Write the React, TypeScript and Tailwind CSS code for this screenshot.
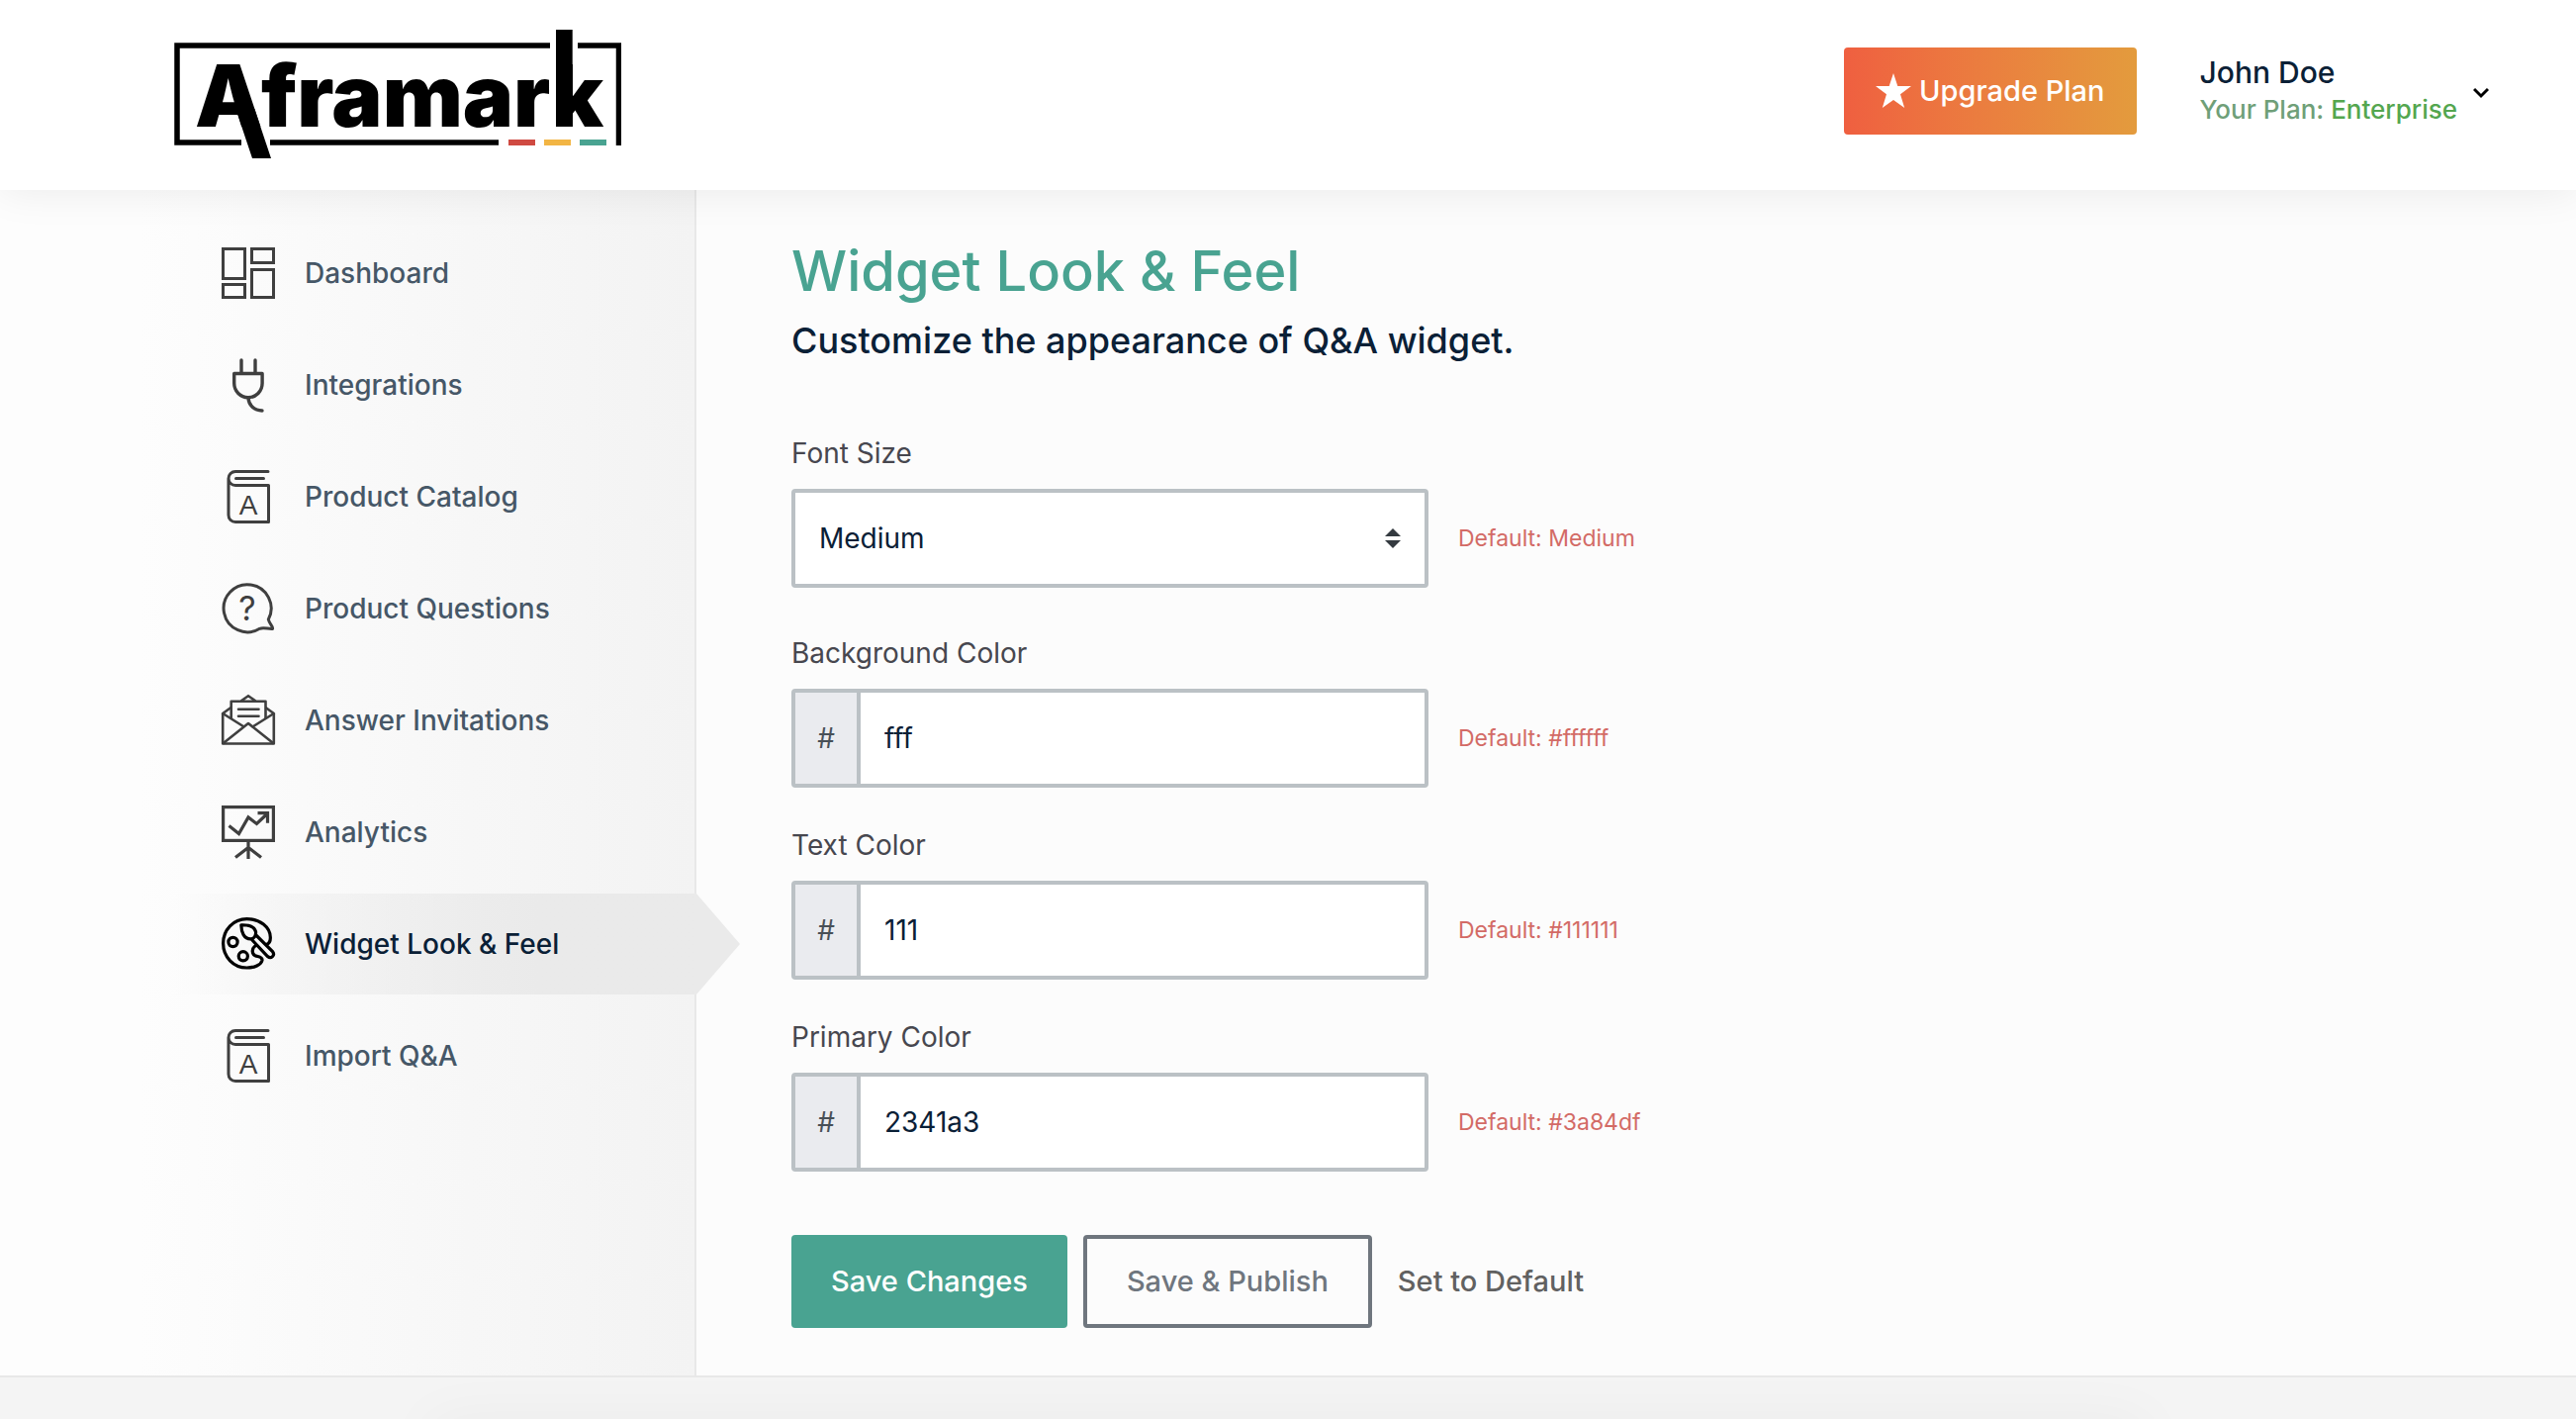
import React, { useState } from 'react'

type IconProps = { children: React.ReactNode; width?: number }

const NavIcon = ({ children, width = 3 }: IconProps) => (
  <svg
    className='h-[54px] w-[54px] shrink-0 overflow-visible'
    viewBox='0 0 54 54'
    fill='none'
    stroke='currentColor'
    strokeWidth={width}
    aria-hidden='true'
  >
    {children}
  </svg>
)

const DashboardIcon = () => (
  <NavIcon>
    <rect x='1.5' y='2.5' width='22' height='30' />
    <rect x='30.5' y='2.5' width='22' height='14' />
    <rect x='1.5' y='38.5' width='22' height='13' />
    <rect x='30.5' y='23.5' width='22' height='28' />
  </NavIcon>
)

const PlugIcon = () => (
  <NavIcon width={3.4}>
    <path d='M20 2v13M34 2v13' strokeLinecap='round' />
    <path d='M12.7 15.5h28.4v9.8c0 8-6.2 14.4-14.2 14.4s-14.2-6.4-14.2-14.4z' strokeLinejoin='round' />
    <path d='M27 40c.3 7.5 6 13 14 13' strokeLinecap='round' />
  </NavIcon>
)

const BookIcon = () => (
  <NavIcon>
    <path
      d='M47 1.5H14a7 7 0 0 0 0 14h33.500v37H14c-4 0-7-3-7-7v-37'
      strokeLinecap='round'
      strokeLinejoin='round'
    />
    <path d='M14.5 8.5H42.5' strokeLinecap='round' />
    <text
      x='27'
      y='45'
      textAnchor='middle'
      fill='currentColor'
      stroke='none'
      className='font-["Liberation_Sans",sans-serif] text-[28px]'
    >
      A
    </text>
  </NavIcon>
)

const QuestionIcon = () => (
  <NavIcon>
    <path
      d='M47.3 38A24 24 0 1 0 38.5 47.3C43 45.5 47 48 51.5 47.5C52.5 45 48.5 43 47.3 38z'
      strokeLinejoin='round'
    />
    <text
      x='26'
      y='39'
      textAnchor='middle'
      fill='currentColor'
      stroke='none'
      className='font-["Inter",sans-serif] text-[34px]'
    >
      ?
    </text>
  </NavIcon>
)

const EnvelopeIcon = () => (
  <NavIcon width={2.6}>
    <path d='M1.2 20v30.5h51.6V20' strokeLinejoin='round' />
    <path d='M9.5 14L1.2 20l21.5 13.5M44.5 14l8.3 6-21.5 13.5M1.2 50.5L27 30l25.8 20.5' strokeLinejoin='round' />
    <path d='M9.7 25V7.7h34.8V25M19.5 7.5L27 2.2l7.5 5.3' strokeLinejoin='round' />
    <path d='M17 15.7h20.5M17 22.8h20.5' strokeLinecap='round' />
  </NavIcon>
)

const AnalyticsIcon = () => (
  <NavIcon width={3.2}>
    <rect x='1.6' y='1.6' width='50.8' height='33.8' />
    <path d='M7.5 20.5l10 8L27 12l8.5 6.5L46 8.5M36.5 7.7h10v10' />
    <path d='M27 36v18M14 52.5l13-10 13 10' />
  </NavIcon>
)

const PaletteIcon = () => (
  <NavIcon width={3.2}>
    <path
      d='M34.5 28.5C30.5 31 30 37 34 38.8C37 40 41.5 39.5 41 43.5C40 48 33 51 25.5 51C12 51 1.6 40 1.6 26.3S12 1.6 25.5 1.6C39 1.6 49 10 49.3 20C49.5 23.5 48 26.5 45.5 27.5'
      strokeLinecap='round'
    />
    <circle cx='11.5' cy='25' r='4.6' />
    <circle cx='21.8' cy='39.3' r='4.6' />
    <path d='M19.8 7.8C27 7.5 33 9 34.5 14.5C35 18.5 33 21.5 29.5 21.8C22.5 22 20 15 19.8 7.8z' strokeLinejoin='round' />
    <path d='M30.5 22.5L46.5 39.5C50 42.5 54.5 38.5 51.5 34.5L34.8 18' />
  </NavIcon>
)

const navItems = [
  { label: 'Dashboard', icon: <DashboardIcon /> },
  { label: 'Integrations', icon: <PlugIcon /> },
  { label: 'Product Catalog', icon: <BookIcon /> },
  { label: 'Product Questions', icon: <QuestionIcon /> },
  { label: 'Answer Invitations', icon: <EnvelopeIcon /> },
  { label: 'Analytics', icon: <AnalyticsIcon /> },
  { label: 'Widget Look & Feel', icon: <PaletteIcon />, active: true },
  { label: 'Import Q&A', icon: <BookIcon /> },
]

const Logo = () => (
  <svg className='h-[130px] w-[452px]' viewBox='0 0 452 130' role='img' aria-label='Aframark'>
    <path d='M380 16H3v98h65M97 114h231M408 16h41.5v101' fill='none' stroke='#000' strokeWidth='5.5' />
    <text x='21' y='98' className='font-["Inter",sans-serif] text-[86px] font-black'>
      Aframark
    </text>
    {/* long leg of the A and raised stem of the k */}
    <path d='M62.3 80h19L98 130H79z' />
    <path d='M386 0h16.7v98H386z' />
    <path d='M338 111h27v6h-27z' fill='#cf4a41' />
    <path d='M374 111h27v6h-27z' fill='#f2b544' />
    <path d='M410 111h27v6h-27z' fill='#49a391' />
  </svg>
)

const Header = () => (
  <header className='relative z-10 flex h-48 items-start justify-between bg-white pt-[30px] pr-22 pl-44 shadow-[0_0_40px_rgba(0,0,0,0.08)]'>
    <a href='#'>
      <Logo />
    </a>
    <div className='mt-[18px] flex items-center gap-16'>
      <button className='flex h-22 items-center gap-2 rounded bg-linear-to-r from-[#ef5f40] to-[#e39b3d] px-8 text-[29px] font-medium text-white'>
        <svg className='h-9 w-9' viewBox='0 0 36 36' fill='currentColor' aria-hidden='true'>
          <path d='M18 0l4.3 13H36L25 21.3 29.2 35 18 27 6.8 35 11 21.3 0 13h13.7z' />
        </svg>
        Upgrade Plan
      </button>
      <button className='flex items-center gap-4 text-left font-medium'>
        <span className='flex flex-col leading-[38px]'>
          <span className='text-[30px] text-[#0a2036]'>John Doe</span>
          <span className='text-[26px] text-[#6f9f78]'>
            Your Plan: <span className='text-[#54a64f]'>Enterprise</span>
          </span>
        </span>
        <svg className='h-4 w-4' viewBox='0 0 16 16' fill='none' stroke='#000' strokeWidth='3' aria-hidden='true'>
          <path d='M1 6l7 7 7-7' />
        </svg>
      </button>
    </div>
  </header>
)

const Sidebar = () => (
  <aside className='w-[704px] shrink-0 border-r-2 border-[#e8e8e8] bg-linear-to-r from-[#fdfdfd] from-20% to-[#f3f3f3] pt-[33px] pl-44'>
    <nav className='-mr-0.5'>
      <ul className='flex flex-col gap-[11px]'>
        {navItems.map((item) => (
          <li key={item.label} className='relative'>
            <a
              href='#'
              className={
                item.active
                  ? 'flex items-center gap-[30px] bg-linear-to-r from-transparent to-[#eaeaea] to-70% py-6 pl-12 text-black'
                  : 'flex items-center gap-[30px] py-6 pl-12 text-[#3f3f3f]'
              }
            >
              {item.icon}
              <span className={item.active ? 'text-[28px] font-medium text-[#0a2036]' : 'text-[28px] font-medium text-[#465767]'}>
                {item.label}
              </span>
            </a>
            {item.active && (
              <svg className='absolute top-0 left-full h-[102px] w-11' viewBox='0 0 44 102' fill='#eaeaea' aria-hidden='true'>
                <path d='M0 0l44 51L0 102z' />
              </svg>
            )}
          </li>
        ))}
      </ul>
    </nav>
  </aside>
)

type ColorFieldProps = { id: string; label: string; value: string; hint: string; onChange: (v: string) => void }

const ColorField = ({ id, label, value, hint, onChange }: ColorFieldProps) => (
  <div>
    <label htmlFor={id} className='mb-4 block text-[28px] leading-10 text-[#47474f]'>
      {label}
    </label>
    <div className='flex items-center gap-[30px]'>
      <div className='flex h-[100px] w-[644px] overflow-hidden rounded border-4 border-[#bbc1c5] bg-white'>
        <span className='flex w-[66px] shrink-0 items-center justify-center border-r-4 border-[#bbc1c5] bg-[#eaebef] text-[28px] text-[#495057]'>
          #
        </span>
        <input
          id={id}
          type='text'
          value={value}
          onChange={(e) => onChange(e.target.value)}
          className='min-w-0 flex-1 pl-6 text-[28px] text-[#0a2036] outline-none'
        />
      </div>
      <span className='text-[23px] text-[#d36b66]'>{hint}</span>
    </div>
  </div>
)

const WidgetForm = () => {
  const [fontSize, setFontSize] = useState('Medium')
  const [background, setBackground] = useState('fff')
  const [text, setText] = useState('111')
  const [primary, setPrimary] = useState('2341a3')

  return (
    <form className='mt-[72px]' onSubmit={(e) => e.preventDefault()}>
      <label htmlFor='font-size' className='mb-4 block text-[28px] leading-10 text-[#47474f]'>
        Font Size
      </label>
      <div className='mb-[46px] flex items-center gap-[30px]'>
        <div className='relative w-[644px]'>
          <select
            id='font-size'
            value={fontSize}
            onChange={(e) => setFontSize(e.target.value)}
            className='block h-[100px] w-full appearance-none rounded border-4 border-[#bbc1c5] bg-white pl-6 text-[28px] text-[#0a2036] outline-none'
          >
            <option>Small</option>
            <option>Medium</option>
            <option>Large</option>
          </select>
          <svg
            className='pointer-events-none absolute top-10 right-7 h-5 w-4'
            viewBox='0 0 16 20'
            fill='#343a40'
            aria-hidden='true'
          >
            <path d='M8 0l8 8H0zM8 20l8-8H0z' />
          </svg>
        </div>
        <span className='text-[23px] text-[#d36b66]'>Default: Medium</span>
      </div>
      <div className='flex flex-col gap-[38px]'>
        <ColorField id='bg-color' label='Background Color' value={background} hint='Default: #ffffff' onChange={setBackground} />
        <ColorField id='text-color' label='Text Color' value={text} hint='Default: #111111' onChange={setText} />
        <ColorField id='primary-color' label='Primary Color' value={primary} hint='Default: #3a84df' onChange={setPrimary} />
      </div>
      <div className='mt-16 flex gap-4 text-[29px] font-medium'>
        <button type='submit' className='h-[94px] rounded bg-[#49a391] px-10 text-white'>
          Save Changes
        </button>
        <button type='button' className='h-[94px] rounded border-4 border-[#6f767e] px-10 text-[#6f767e]'>
          Save & Publish
        </button>
        <button type='button' className='ml-2.5 text-[#616161]'>
          Set to Default
        </button>
      </div>
    </form>
  )
}

const App = () => {
  return (
    <div className='flex min-h-screen flex-col bg-[#fcfcfc] font-["Inter","Liberation_Sans",sans-serif]'>
      <Header />
      <div className='flex'>
        <Sidebar />
        <main className='flex-1 pt-[50px] pb-12 pl-24'>
          <h1 className='text-[56px] leading-16 font-medium text-[#49a391]'>Widget Look & Feel</h1>
          <p className='mt-4 text-[36px] leading-11 font-medium text-[#0a2036]'>Customize the appearance of Q&A widget.</p>
          <WidgetForm />
        </main>
      </div>
      <footer className='h-11 overflow-hidden border-t-2 border-[#e8e8e8] bg-[#f4f4f4] pt-[42px]'>
        <div className='mx-auto h-20 w-2/3 shadow-[0_0_60px_rgba(0,0,0,0.04)]' />
      </footer>
    </div>
  )
}

export default App
